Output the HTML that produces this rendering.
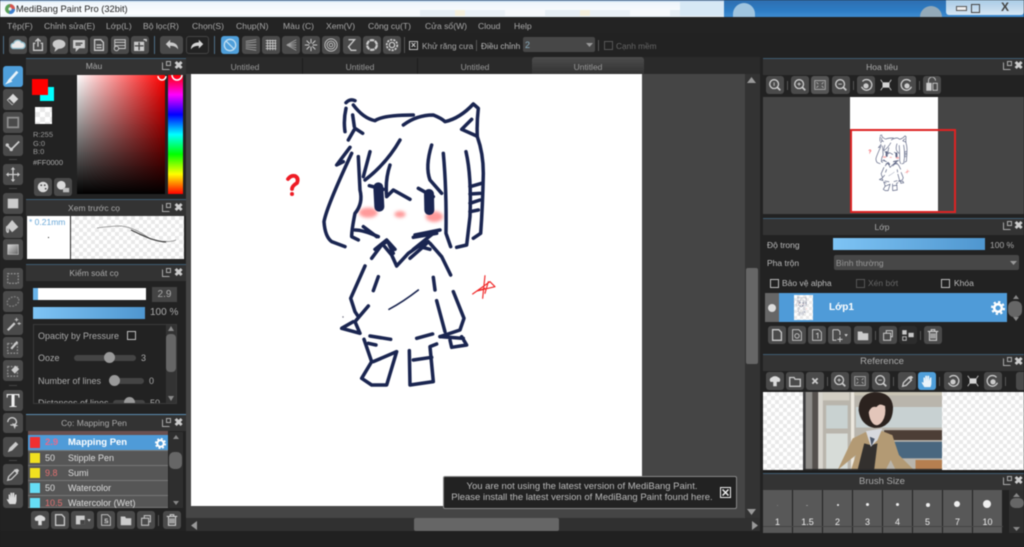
<!DOCTYPE html>
<html><head><meta charset="utf-8"><style>
html,body{margin:0;padding:0;background:#1f1f1f;width:1024px;height:547px;overflow:hidden}
#r{position:relative;width:1024px;height:547px;overflow:hidden;font-family:"Liberation Sans","Noto Sans CJK SC",sans-serif;font-size:9px;color:#aaa;filter:blur(.4px)}
#r div,#r span,#r i,#r>svg{position:absolute}
.t{white-space:nowrap;line-height:12px}
.m{font-size:8.6px;color:#a8a8a8}
.c{text-align:center}
.h{background:#333;border-top:1px solid #3f5b70;box-sizing:border-box;height:17px}
.b{display:block;background:#4a4a4a;border-radius:3px;width:18px;height:18px}
.b svg{position:absolute;left:0;top:0;width:100%;height:100%;fill:none;stroke:#ddd;stroke-width:1.5;transform:scale(.88);opacity:.88}
.cb{width:7px;height:7px;border:1px solid #bbb}
.ck{background:repeating-conic-gradient(#e9e9e9 0 25%,#fff 0 50%) 0 0/8px 8px}
.row{left:28px;width:140px;height:15px;background:#565656;border-bottom:1px solid #777;box-sizing:border-box}
.cell{top:490px;width:29px;height:43px;background:#585858}
.cell b{position:absolute;left:0;right:0;top:27px;text-align:center;font:9px "Liberation Sans",sans-serif;color:#eee}
.cell u{position:absolute;background:#eee;border-radius:50%}
.x{font-size:11px;font-weight:bold;color:#ccc}
.po{width:8px;height:8px;border:1px solid #aaa;border-right-color:transparent;border-top-color:transparent;box-sizing:border-box}
.po::after{content:"";position:absolute;left:3px;top:-2px;width:5px;height:5px;border:1px solid #aaa;box-sizing:border-box}
</style></head><body><div id="r">

<!-- title bar -->
<div style="left:0;top:0;width:1024px;height:17px;background:linear-gradient(#5f8fc4 0,#eef5fb 2px,#fbfdfe 14px,#e6eef5 17px)"></div>
<div style="left:380px;top:10px;width:300px;height:6px;background:repeating-linear-gradient(90deg,#f5f8fb 0 40px,#e6eef4 40px 75px,#f4efdc 75px 85px,#e9f0f6 85px 125px)"></div>
<div style="left:724px;top:0;width:300px;height:17px;background:linear-gradient(#2f6eae,#2d7cc4 60%,#3f8bd0)"></div>
<div style="left:680px;top:2px;width:44px;height:14px;background:#d7e8f5"></div>
<div style="left:733px;top:3px;width:22px;height:14px;border-radius:11px 11px 0 0;background:#9fc4df"></div>
<div style="left:920px;top:6px;width:22px;height:11px;border-radius:11px 11px 0 0;background:#93a9b8"></div>
<div style="left:946px;top:0;width:78px;height:15px;background:linear-gradient(#a9cbe6,#d6e6f3);border-radius:0 0 3px 3px"></div>
<div style="left:956px;top:6px;width:9px;height:3px;background:#eee;border:1px solid #555"></div>
<div style="left:971px;top:4px;width:7px;height:7px;border:1px solid #444"></div>
<span class="t" style="left:1001px;top:1px;font-size:12px;font-weight:bold;color:#444">X</span>
<svg style="left:5px;top:4px" width="10" height="10"><circle cx="5" cy="5" r="5" fill="#5aa05a"/><path d="M5 0A5 5 0 0 1 10 5L5 5Z" fill="#d9534f"/><path d="M5 5L10 5A5 5 0 0 1 4 10Z" fill="#3f7fcf"/><circle cx="5" cy="5" r="1.6" fill="#eee"/></svg>
<span class="t" style="left:16px;top:3px;font-size:9.3px;color:#222">MediBang Paint Pro (32bit)</span>

<!-- menu bar -->
<div style="left:0;top:17px;width:1024px;height:16px;background:#232323"></div>
<span class="t m" style="left:7px;top:20px">Tệp(F)</span>
<span class="t m" style="left:44px;top:20px">Chỉnh sửa(E)</span>
<span class="t m" style="left:106px;top:20px">Lớp(L)</span>
<span class="t m" style="left:143px;top:20px">Bộ lọc(R)</span>
<span class="t m" style="left:192px;top:20px">Chọn(S)</span>
<span class="t m" style="left:236px;top:20px">Chụp(N)</span>
<span class="t m" style="left:283px;top:20px">Màu (C)</span>
<span class="t m" style="left:326px;top:20px">Xem(V)</span>
<span class="t m" style="left:368px;top:20px">Công cụ(T)</span>
<span class="t m" style="left:425px;top:20px">Cửa sổ(W)</span>
<span class="t m" style="left:478px;top:20px">Cloud</span>
<span class="t m" style="left:514px;top:20px">Help</span>

<!-- toolbar -->
<div style="left:0;top:33px;width:1024px;height:24px;background:#222"></div>
<div style="left:3px;top:36px;width:1px;height:18px;background:#4f6f88"></div>
<i class="b" style="left:9px;top:36px"><svg viewBox="0 0 18 18"><path d="M4 13a3 3 0 0 1 0-6a5 5 0 0 1 9-1a3.500 3.500 0 0 1 1 7Z" fill="#fff" stroke="#9cd"/></svg></i>
<i class="b" style="left:29px;top:36px"><svg viewBox="0 0 18 18"><path d="M6 7H4v8h10V7h-2M9 11V2M6 5l3-3l3 3"/></svg></i>
<i class="b" style="left:50px;top:36px"><svg viewBox="0 0 18 18"><ellipse cx="9" cy="8" rx="6.500" ry="4.500" fill="#ddd"/><path d="M6 11l-1 4l4-3" fill="#ddd"/></svg></i>
<i class="b" style="left:70px;top:36px"><svg viewBox="0 0 18 18"><path d="M3 4h12v8H9l-3 3v-3H3Z" fill="#ddd"/><path d="M5 7h8M5 9h6" stroke="#444"/></svg></i>
<i class="b" style="left:90px;top:36px"><svg viewBox="0 0 18 18"><path d="M4 3h7l3 3v9H4ZM6 9h6M6 12h6"/></svg></i>
<i class="b" style="left:111px;top:36px"><svg viewBox="0 0 18 18" style="stroke-width:1.100"><path d="M3 3h12v10H3ZM3 6h12M3 9.500h12"/><circle cx="5" cy="13" r="2.500" fill="#474747"/></svg></i>
<i class="b" style="left:131px;top:36px"><svg viewBox="0 0 18 18"><path d="M3 6h10v9H3Z" fill="#ddd"/><path d="M8 6v9M3 10h10" stroke="#444"/><path d="M13 3h3v2"/></svg></i>
<div style="left:154px;top:36px;width:1px;height:18px;background:#4f6f88"></div>
<i class="b" style="left:160px;top:36px;width:23px"><svg viewBox="0 0 23 18"><path d="M5 8l5-5v3c6 0 9 3 9 8c-2-3-5-4-9-4v3Z" fill="#ddd" stroke="none"/></svg></i>
<i class="b" style="left:186px;top:36px;width:23px;background:#222;box-shadow:inset 0 0 0 1px #444"><svg viewBox="0 0 23 18"><path d="M18 8l-5-5v3c-6 0-9 3-9 8c2-3 5-4 9-4v3Z" fill="#eee" stroke="none"/></svg></i>
<div style="left:214px;top:36px;width:1px;height:18px;background:#4f6f88"></div>
<i class="b" style="left:221px;top:36px;background:#4f9fda"><svg viewBox="0 0 18 18" style="stroke:#cfe6f5"><circle cx="9" cy="9" r="6.500"/><path d="M4.500 4.500l9 9"/></svg></i>
<i class="b" style="left:242px;top:36px"><svg viewBox="0 0 18 18" style="stroke-width:1;stroke:#aaa"><path d="M3 5l12-2M3 7l12-1.500M3 9h12M3 11l12 1M3 13l12 2"/></svg></i>
<i class="b" style="left:262px;top:36px"><svg viewBox="0 0 18 18" style="stroke-width:1"><path d="M3 4h12M3 7h12M3 10h12M3 13h12M5 3v12M8 3v12M11 3v12M14 3v12"/></svg></i>
<i class="b" style="left:282px;top:36px"><svg viewBox="0 0 18 18" style="stroke-width:1;stroke:#aaa"><path d="M4 9l11-6M4 9l11-3M4 9h11M4 9l11 3M4 9l11 6"/></svg></i>
<i class="b" style="left:302px;top:36px"><svg viewBox="0 0 18 18" style="stroke-width:1.100"><path d="M9 2v14M2 9h14M4 4l10 10M14 4L4 14"/><circle cx="9" cy="9" r="2" fill="#474747" stroke="none"/></svg></i>
<i class="b" style="left:322px;top:36px"><svg viewBox="0 0 18 18" style="stroke-width:1"><circle cx="9" cy="9" r="7"/><circle cx="9" cy="9" r="4.500"/><circle cx="9" cy="9" r="2"/></svg></i>
<i class="b" style="left:343px;top:36px"><svg viewBox="0 0 18 18"><path d="M5 3h7L5 11l3 4h6"/></svg></i>
<i class="b" style="left:363px;top:36px"><svg viewBox="0 0 18 18" style="stroke-width:2.500"><circle cx="9" cy="9" r="5.500" stroke-dasharray="5 .8"/></svg></i>
<i class="b" style="left:383px;top:36px"><svg viewBox="0 0 18 18"><circle cx="9" cy="9" r="3"/><circle cx="9" cy="9" r="6" stroke-dasharray="2.500 1.200" stroke-width="2"/></svg></i>
<div style="left:404px;top:37px;width:1px;height:16px;background:#555"></div>
<div class="cb" style="left:409px;top:41px"></div>
<span class="t x" style="left:409px;top:39px;font-size:9px;width:9px;text-align:center">×</span>
<span class="t" style="left:422px;top:40px;font-size:8.300px">Khử răng cưa</span>
<div style="left:476px;top:40px;width:1px;height:11px;background:#555"></div>
<span class="t" style="left:481px;top:40px;color:#bbb;font-size:8.300px">Điều chỉnh</span>
<div style="left:523px;top:37px;width:72px;height:15px;background:#474747;border-radius:2px"></div>
<span class="t" style="left:525px;top:39px;color:#8ab">2</span>
<svg style="left:586px;top:43px" width="7" height="4"><path d="M0 0h7L3.500 4Z" fill="#999"/></svg>
<div style="left:598px;top:40px;width:1px;height:11px;background:#555"></div>
<div class="cb" style="left:604px;top:41px;border-color:#555"></div>
<span class="t" style="left:616px;top:40px;color:#666;font-size:8.300px">Cạnh mềm</span>

<!-- tool column -->
<div style="left:0;top:57px;width:26px;height:474px;background:#222"></div>
<i class="b" style="left:3px;top:66px;width:20px;height:21px;background:#4f9fda"><svg viewBox="0 0 20 21"><path d="M5 16L15 5" stroke="#fff" stroke-width="3"/><path d="M3 18l3-4l2 2Z" fill="#fff" stroke="#fff"/></svg></i>
<i class="b" style="left:3px;top:89px;width:20px;height:21px"><svg viewBox="0 0 20 21"><path d="M3 11l7-7l6 6l-7 7Z" fill="#eee" stroke="none"/><path d="M6 10l5 5l-2 1l-5-5Z" fill="#555" stroke="none"/></svg></i>
<i class="b" style="left:3px;top:112px;width:20px;height:21px"><svg viewBox="0 0 20 21"><rect x="4" y="5" width="12" height="11" stroke="#999" stroke-width="2"/></svg></i>
<i class="b" style="left:3px;top:135px;width:20px;height:21px"><svg viewBox="0 0 20 21"><path d="M3 10l5 5L17 6" stroke-width="2"/><circle cx="3.500" cy="10" r="1.200" fill="#ddd"/><circle cx="8" cy="15" r="1.200" fill="#ddd"/></svg></i>
<i class="b" style="left:3px;top:164px;width:20px;height:21px"><svg viewBox="0 0 20 21"><path d="M10 3v15M3 10.500h14"/><path d="M10 2l-2.500 3h5ZM10 19l-2.500-3h5ZM2 10.500l3-2.500v5ZM18 10.500l-3-2.500v5Z" fill="#ddd" stroke="none"/></svg></i>
<i class="b" style="left:3px;top:193px;width:20px;height:21px"><svg viewBox="0 0 20 21"><rect x="4" y="5" width="12" height="11" fill="#ddd" stroke="none"/></svg></i>
<i class="b" style="left:3px;top:216px;width:20px;height:22px"><svg viewBox="0 0 20 22"><path d="M9 3l7 8l-7 6l-6-7Z" fill="#ddd" stroke="none"/><path d="M3 10c-1 4 0 7 1 7s1-3 0-6"/></svg></i>
<i class="b" style="left:3px;top:239px;width:20px;height:21px"><svg viewBox="0 0 20 21"><defs><linearGradient id="gg" x1="0" x2="1" y1="0" y2="1"><stop offset="0" stop-color="#eee"/><stop offset="1" stop-color="#666"/></linearGradient></defs><rect x="4" y="5" width="12" height="11" fill="url(#gg)" stroke="#ddd" stroke-width=".7"/></svg></i>
<i class="b" style="left:3px;top:268px;width:20px;height:21px"><svg viewBox="0 0 20 21"><rect x="4" y="5" width="12" height="11" stroke="#999" stroke-dasharray="2 1.500"/></svg></i>
<i class="b" style="left:3px;top:291px;width:20px;height:21px"><svg viewBox="0 0 20 21"><ellipse cx="10" cy="10.500" rx="7" ry="5" transform="rotate(-25 10 10.500)" stroke="#888" stroke-dasharray="2 1.500"/></svg></i>
<i class="b" style="left:3px;top:314px;width:20px;height:21px"><svg viewBox="0 0 20 21"><path d="M4 17L12 9" stroke-width="2.500"/><path d="M14 3v4M12 5h4M17 8v3M15 9.500h4" stroke-width="1"/></svg></i>
<i class="b" style="left:3px;top:337px;width:20px;height:21px"><svg viewBox="0 0 20 21"><rect x="4" y="6" width="11" height="11" stroke="#999" stroke-dasharray="2 1.500"/><path d="M8 12l7-8" stroke-width="2.500"/></svg></i>
<i class="b" style="left:3px;top:360px;width:20px;height:21px"><svg viewBox="0 0 20 21"><rect x="4" y="6" width="11" height="11" stroke="#999" stroke-dasharray="2 1.500"/><path d="M8 10l5-5l4 4l-5 5Z" fill="#ddd" stroke="none"/></svg></i>
<i class="b" style="left:3px;top:390px;width:20px;height:21px"></i>
<span class="t" style="left:3px;top:392px;width:20px;text-align:center;font:bold 20px/18px 'Liberation Serif',serif;color:#eee">T</span>
<i class="b" style="left:3px;top:413px;width:20px;height:20px"><svg viewBox="0 0 20 20"><path d="M4 9a5 5 0 0 1 10 0a5 4 0 0 1-7 3"/><path d="M9 10l7 3l-3 1l-1 3Z" fill="#ddd" stroke="none"/></svg></i>
<i class="b" style="left:3px;top:437px;width:20px;height:20px"><svg viewBox="0 0 20 20"><path d="M4 16l2-5l7-7l3 3l-7 7Z" fill="#ddd" stroke="none"/></svg></i>
<i class="b" style="left:3px;top:464px;width:20px;height:21px"><svg viewBox="0 0 20 21"><path d="M4 17l1-4l7-7l3 3l-7 7Z"/><path d="M11 5l4 4l2-3l-2-2Z" fill="#ddd" stroke="none"/></svg></i>
<i class="b" style="left:3px;top:488px;width:20px;height:20px"><svg viewBox="0 0 20 20"><path d="M6 17c-1-2-3-4-3-6l2 1V6h1.500l.5 4V4h2v6l.5-6h2v6l1-4h1.500v7c0 2-1 3-1 4Z" fill="#eee" stroke="none"/></svg></i>
<div style="left:9px;top:159px;width:8px;height:1px;background:#444"></div>
<div style="left:9px;top:188px;width:8px;height:1px;background:#444"></div>
<div style="left:9px;top:385px;width:8px;height:1px;background:#444"></div>
<div style="left:9px;top:460px;width:8px;height:1px;background:#444"></div>

<!-- left panels -->
<div style="left:26px;top:57px;width:160px;height:474px;background:#222"></div>
<div class="h" style="left:26px;top:58px;width:160px"></div>
<span class="t c" style="left:26px;width:136px;top:60px;font-size:8.500px">Màu</span>
<div class="po" style="left:162px;top:62px"></div><span class="t x" style="left:174px;top:60px">✖</span>
<div style="left:40px;top:87px;width:14px;height:14px;background:#0ff"></div>
<div style="left:32px;top:79px;width:16px;height:16px;background:#f00"></div>
<div class="ck" style="left:35px;top:107px;width:17px;height:17px;background-size:10px 10px"></div>
<div style="left:77px;top:75px;width:88px;height:119px;background:linear-gradient(transparent,#000),linear-gradient(90deg,#fff,#f00)"></div>
<div style="left:168px;top:75px;width:15px;height:119px;background:linear-gradient(#f00,#f0f 16.600%,#00f 33.300%,#0ff 50%,#0f0 66.600%,#ff0 83.300%,#f00)"></div>
<svg style="left:155px;top:72px" width="32" height="12"><path d="M3 4a4 4 0 0 0 8 0M17 3a5 5 0 0 0 10 0" fill="none" stroke="#fff" stroke-width="1.500"/></svg>
<span class="t" style="left:33px;top:131px;font-size:7.500px;line-height:8.500px;color:#999">R:255<br>G:0<br>B:0</span>
<span class="t" style="left:33px;top:157px;font-size:7.500px;color:#aaa">#FF0000</span>
<i class="b" style="left:34px;top:178px"><svg viewBox="0 0 18 18"><circle cx="9" cy="9" r="6" fill="#eee" stroke="none"/><circle cx="7" cy="7" r="1" fill="#444" stroke="none"/><circle cx="11" cy="7" r="1" fill="#444" stroke="none"/><circle cx="12" cy="11" r="1" fill="#444" stroke="none"/></svg></i>
<i class="b" style="left:54px;top:178px"><svg viewBox="0 0 18 18"><circle cx="7" cy="7" r="5" fill="#eee" stroke="none"/><rect x="9" y="10" width="7" height="5" fill="#ccc" stroke="none"/></svg></i>

<div class="h" style="left:26px;top:199px;width:160px"></div>
<span class="t c" style="left:26px;width:136px;top:202px;font-size:8.500px">Xem trước cọ</span>
<div class="po" style="left:162px;top:204px"></div><span class="t x" style="left:174px;top:202px">✖</span>
<div style="left:27px;top:216px;width:43px;height:43px;background:#fff"></div>
<span class="t" style="left:29px;top:216px;font-size:8.500px;color:#6aa8d8">* 0.21mm</span>
<div style="left:48px;top:237px;width:1px;height:1px;background:#222"></div>
<div class="ck" style="left:71px;top:216px;width:113px;height:43px"></div>
<svg style="left:71px;top:216px" width="113" height="43"><path d="M26 12Q40 10 50 10Q62 11 78 22Q92 27 102 25L105 24" fill="none" stroke="#888" stroke-width=".8"/><path d="M60 14Q70 19 80 23Q90 26 95 26" fill="none" stroke="#333" stroke-width="1"/></svg>

<div class="h" style="left:26px;top:264px;width:160px"></div>
<span class="t c" style="left:26px;width:136px;top:267px;font-size:8.500px">Kiểm soát cọ</span>
<div class="po" style="left:162px;top:269px"></div><span class="t x" style="left:174px;top:267px">✖</span>
<div style="left:33px;top:288px;width:113px;height:12px;background:#fff"></div>
<div style="left:33px;top:288px;width:5px;height:12px;background:#6ab4ea"></div>
<div style="left:152px;top:287px;width:25px;height:15px;background:#444"></div>
<span class="t c" style="left:152px;width:25px;top:289px;font-size:10px">2.9</span>
<div style="left:33px;top:307px;width:112px;height:12px;background:linear-gradient(90deg,#7ec4f5,#4f96cf)"></div>
<span class="t" style="left:150px;top:307px;font-size:10px">100 %</span>
<div style="left:33px;top:324px;width:144px;height:80px;border:1px solid #3a3a3a;box-sizing:border-box;overflow:hidden">
<span class="t" style="left:4px;top:5px">Opacity by Pressure</span>
<div class="cb" style="left:93px;top:6px"></div>
<span class="t" style="left:4px;top:27px">Ooze</span>
<div style="left:40px;top:30px;width:62px;height:6px;background:#444;border-radius:3px"></div>
<div style="left:70px;top:27px;width:11px;height:11px;border-radius:50%;background:#999"></div>
<span class="t" style="left:107px;top:27px">3</span>
<span class="t" style="left:4px;top:50px">Number of lines</span>
<div style="left:75px;top:53px;width:35px;height:6px;background:#444;border-radius:3px"></div>
<div style="left:75px;top:50px;width:11px;height:11px;border-radius:50%;background:#999"></div>
<span class="t" style="left:115px;top:50px">0</span>
<span class="t" style="left:4px;top:72px">Distances of lines</span>
<div style="left:79px;top:75px;width:32px;height:6px;background:#444;border-radius:3px"></div>
<div style="left:90px;top:72px;width:11px;height:11px;border-radius:50%;background:#999"></div>
<span class="t" style="left:116px;top:72px">50</span>
<div style="left:132px;top:0;width:10px;height:78px;background:#333"></div>
<div style="left:132px;top:9px;width:10px;height:38px;background:#666;border-radius:4px"></div>
</div>
<svg style="left:167px;top:325px" width="8" height="78"><path d="M1 6L4 1L7 6ZM1 71h6L4 76Z" fill="#888"/></svg>

<div class="h" style="left:26px;top:414px;width:160px;border-top-color:#5b8cb0"></div>
<span class="t c" style="left:26px;width:136px;top:417px;font-size:8.500px">Cọ: Mapping Pen</span>
<div class="po" style="left:162px;top:419px"></div><span class="t x" style="left:174px;top:417px">✖</span>
<div class="row" style="top:431px;height:5px;background:#6a5050"></div>
<div class="row" style="top:435px;height:16px;background:#4f9bd8"></div>
<div class="row" style="top:451px"></div><div class="row" style="top:466px"></div><div class="row" style="top:481px"></div><div class="row" style="top:496px;height:12px;overflow:hidden"></div>
<div style="left:30px;top:437px;width:10px;height:11px;background:#f03030"></div><span class="t" style="left:45px;top:437px;color:#e86a8a;font-weight:bold;font-size:9.500px">2.9</span><span class="t" style="left:68px;top:437px;color:#fff;font-weight:bold;font-size:9.500px">Mapping Pen</span>
<svg style="left:155px;top:438px" width="11" height="11"><circle cx="5.500" cy="5.500" r="3.200" fill="none" stroke="#fff" stroke-width="2"/><circle cx="5.500" cy="5.500" r="4.800" fill="none" stroke="#fff" stroke-width="1.500" stroke-dasharray="2 1.800"/></svg>
<div style="left:30px;top:453px;width:10px;height:10px;background:#f0e020"></div><span class="t" style="left:45px;top:452px;color:#ddd">50</span><span class="t" style="left:68px;top:452px;color:#ddd">Stipple Pen</span>
<div style="left:30px;top:468px;width:10px;height:10px;background:#f0e020"></div><span class="t" style="left:45px;top:467px;color:#e07070">9.8</span><span class="t" style="left:68px;top:467px;color:#ddd">Sumi</span>
<div style="left:30px;top:483px;width:10px;height:10px;background:#66ddf5"></div><span class="t" style="left:45px;top:482px;color:#ddd">50</span><span class="t" style="left:68px;top:482px;color:#ddd">Watercolor</span>
<div style="left:30px;top:498px;width:10px;height:10px;background:#66ddf5"></div><span class="t" style="left:45px;top:497px;color:#e07070">10.5</span><span class="t" style="left:68px;top:497px;color:#ddd">Watercolor (Wet)</span>
<div style="left:169px;top:432px;width:14px;height:76px;background:#2e2e2e"></div>
<div style="left:169px;top:452px;width:13px;height:17px;background:#666;border-radius:5px"></div>
<svg style="left:172px;top:433px" width="8" height="74"><path d="M1 6L4 2L7 6ZM1 68h6L4 72Z" fill="#888"/></svg>
<i class="b" style="left:31px;top:511px"><svg viewBox="0 0 18 18"><path d="M4 10a3 3 0 0 1 1-5a5 4 0 0 1 8 0a3 3 0 0 1 1 5h-3v5H7v-5Z" fill="#eee" stroke="none"/></svg></i>
<i class="b" style="left:51px;top:511px"><svg viewBox="0 0 18 18"><path d="M4 3h7l3 3v9H4Z"/></svg></i>
<i class="b" style="left:71px;top:511px;width:23px"><svg viewBox="0 0 23 18"><rect x="4" y="4" width="10" height="10" fill="#ddd" stroke="none"/><path d="M9 9h5v5H9Z" fill="#444" stroke="none"/><path d="M17 8h4l-2 3Z" fill="#ddd" stroke="none"/></svg></i>
<i class="b" style="left:97px;top:511px"><svg viewBox="0 0 18 18" style="stroke-width:1"><path d="M4 3h7l3 3v9H4Z"/><path d="M11 8H8v2h3v2H7"/></svg></i>
<i class="b" style="left:117px;top:511px"><svg viewBox="0 0 18 18"><path d="M3 5h5l1 2h6v8H3Z" fill="#ddd" stroke="none"/></svg></i>
<i class="b" style="left:137px;top:511px"><svg viewBox="0 0 18 18" style="stroke-width:1.100"><path d="M4 7h8v8H4ZM7 7V4h7v7h-2"/></svg></i>
<div style="left:158px;top:515px;width:1px;height:11px;background:#555"></div>
<i class="b" style="left:163px;top:511px"><svg viewBox="0 0 18 18" style="stroke-width:1.300"><path d="M3 5h12M5 5v10h8V5M7 7v6M9 7v6M11 7v6M7 5V3h4v2"/></svg></i>

<!-- tabs -->
<div style="left:186px;top:57px;width:577px;height:17px;background:#2a2a2a"></div>
<div style="left:532px;top:57px;width:112px;height:17px;background:linear-gradient(#4c4c4c,#333);border-radius:3px 3px 0 0"></div>
<div style="left:302px;top:58px;width:1px;height:16px;background:#1c1c1c"></div>
<div style="left:417px;top:58px;width:1px;height:16px;background:#1c1c1c"></div>
<span class="t c" style="left:188px;width:114px;top:61px;font-size:8.500px;color:#999">Untitled</span>
<span class="t c" style="left:303px;width:114px;top:61px;font-size:8.500px;color:#999">Untitled</span>
<span class="t c" style="left:418px;width:114px;top:61px;font-size:8.500px;color:#999">Untitled</span>
<span class="t c" style="left:532px;width:112px;top:61px;font-size:8.500px;color:#999">Untitled</span>

<!-- canvas -->
<div style="left:186px;top:74px;width:559px;height:444px;background:#454545"></div>
<div style="left:191px;top:74px;width:451px;height:432px;background:#fff"></div>
<div style="left:745px;top:74px;width:15px;height:444px;background:#333"></div>
<div style="left:746px;top:268px;width:12px;height:96px;background:#666;border-radius:2px"></div>
<svg style="left:747px;top:76px" width="9" height="7"><path d="M0 7L4.500 1L9 7Z" fill="#999"/></svg>
<svg style="left:747px;top:509px" width="9" height="7"><path d="M0 0h9L4.500 6Z" fill="#999"/></svg>
<div style="left:186px;top:518px;width:574px;height:13px;background:#303030"></div>
<div style="left:414px;top:518px;width:145px;height:13px;background:#666;border-radius:2px"></div>
<svg style="left:752px;top:521px" width="7" height="9"><path d="M0 0L6 4.500L0 9Z" fill="#999"/></svg>
<svg style="left:190px;top:521px" width="7" height="9"><path d="M7 0L1 4.500L7 9Z" fill="#999"/></svg>
<div style="left:186px;top:531px;width:577px;height:16px;background:#202020"></div>
<div style="left:0;top:531px;width:186px;height:16px;background:#202020"></div>

<!-- drawing -->
<svg style="left:0;top:0;pointer-events:none" width="1024" height="547" viewBox="0 0 1024 547" fill="none" stroke-linecap="round" stroke-linejoin="round">
<defs>
<filter id="bl" x="-30%" y="-30%" width="160%" height="160%"><feGaussianBlur stdDeviation="5"/></filter>
<g id="dh">
<g filter="url(#bl)">
<ellipse cx="145" cy="368" rx="28" ry="15" fill="#ff9a9a" stroke="none"/>
<ellipse cx="240" cy="373" rx="17" ry="10" fill="#ff9a9a" stroke="none"/>
<ellipse cx="343" cy="380" rx="26" ry="16" fill="#ff9a9a" stroke="none"/>
</g>
<g stroke="#1a2550" stroke-width="10.500">
<path d="M78 38Q90 25 105 32M78 55Q70 90 75 125M100 45Q130 85 165 92Q190 75 280 75M85 150L105 115L128 130M98 75L103 110"/>
<path d="M250 105Q290 75 340 75Q365 85 375 95Q420 85 460 42L475 55Q470 100 472 140M455 88L425 118L470 138"/>
<path d="M472 140Q490 190 490 250Q488 350 482 430L460 445"/>
<path d="M90 172L50 225L70 215M95 190Q20 350 12 395Q15 440 35 455L75 470"/>
<path d="M115 200L120 300Q130 340 105 370Q95 420 95 440L115 450"/>
<path d="M150 185L130 260M240 150Q200 220 135 270M210 225Q195 270 200 320L220 300L270 328"/>
<path d="M335 165Q315 230 330 270L365 310M370 190Q380 300 378 430L392 470"/>
<path d="M438 185Q455 260 450 380L440 465L410 472"/>
<path d="M450 290L485 280M450 312L480 310M450 340L480 330M450 365L475 360"/>
<path d="M105 420Q130 420 175 440M130 410L170 440M285 435L360 420M280 442L350 430"/>
<path d="M165 478L200 450L225 478M280 478L340 430M300 470L330 478"/>
<path d="M148 287L190 298M295 295L340 320"/>
<path d="M175 292L178 350M327 312L328 360" stroke-width="30"/>
</g></g>
<g id="db" stroke="#1a2550" stroke-width="10.500">
<path d="M155 55L185 15L200 5M190 15L215 45L230 78L265 40L315 5M270 55L310 20L325 5M330 10L365 50L392 105M205 8L220 40"/>
<path d="M135 78L92 175L105 215L115 230M145 198L105 245L120 280L65 265L100 245"/>
<path d="M175 110L160 152M340 112L345 150"/>
<path d="M295 150Q250 185 207 208" stroke-width="5"/>
<path d="M400 155L432 235L420 270L360 290M350 182L375 275"/>
<path d="M150 288L212 298M290 295L338 282"/>
<path d="M132 298L155 365L125 415L155 435L200 435L230 335L160 365M145 310L168 315"/>
<path d="M268 332L270 435L340 425L330 320L350 312M280 360L335 352"/>
<path d="M390 300L395 322L440 315L425 290M360 290L430 295"/>
</g>
<g id="ds" stroke="#f02a2a" stroke-width="3.500">
<path d="M495 107L488 175M458 162L510 125L525 140L472 153L495 145M505 125L495 160"/>
</g>
<g id="all">
<g transform="translate(320 90) scale(.3333)"><use href="#dh"/></g>
<g transform="translate(320 240) scale(.3333)"><use href="#db"/><use href="#ds"/></g>
<path d="M288 179Q291 175 295 176Q299 178 297 183Q292 186 292 189" stroke="#ee1c25" stroke-width="3.800"/>
<circle cx="292" cy="194" r="2" fill="#ee1c25"/>
</g>
</defs>
<use href="#all"/>
<circle cx="343" cy="317" r=".7" fill="#667"/>
</svg>
<!-- notification -->
<div style="left:443px;top:476px;width:294px;height:33px;background:#222;border:1px solid #888;box-sizing:border-box;border-radius:2px"></div>
<span class="t c" style="left:445px;width:274px;top:481px;font-size:9.500px;color:#bbb">You are not using the latest version of MediBang Paint.</span>
<span class="t c" style="left:445px;width:274px;top:492px;font-size:9.500px;color:#bbb">Please install the latest version of MediBang Paint found here.</span>
<div style="left:720px;top:487px;width:9px;height:9px;border:1px solid #eee"></div>
<svg style="left:722px;top:489px" width="7" height="7"><path d="M.5 .5L6.500 6.500M6.500 .5L.5 6.500" stroke="#eee" stroke-width="1.500"/></svg>

<!-- right column -->
<div style="left:760px;top:57px;width:264px;height:490px;background:#222"></div>
<div class="h" style="left:763px;top:58px;width:261px"></div>
<span class="t c" style="left:763px;width:238px;top:61px;font-size:8.500px">Hoa tiêu</span>
<div class="po" style="left:1003px;top:62px"></div><span class="t x" style="left:1014px;top:60px">✖</span>
<i class="b" style="left:766px;top:76px"><svg viewBox="0 0 18 18"><circle cx="8" cy="8" r="5"/><path d="M11.500 11.500L15 15" stroke-width="2"/><path d="M8 6v4" stroke-width="1"/></svg></i>
<div style="left:787px;top:81px;width:1px;height:9px;background:#555"></div>
<i class="b" style="left:791px;top:76px"><svg viewBox="0 0 18 18"><circle cx="8" cy="8" r="5"/><path d="M11.500 11.500L15 15" stroke-width="2"/><path d="M6 8h4M8 6v4" stroke-width="1"/></svg></i>
<i class="b" style="left:811px;top:76px;background:#555"><svg viewBox="0 0 18 18" style="stroke:#bbb"><rect x="3" y="4" width="12" height="10" stroke-width="1"/><path d="M5 6l2 2M13 6l-2 2M5 12l2-2M13 12l-2-2" stroke-width="1"/></svg></i>
<i class="b" style="left:832px;top:76px"><svg viewBox="0 0 18 18"><circle cx="8" cy="8" r="5"/><path d="M11.500 11.500L15 15" stroke-width="2"/><path d="M6 8h4" stroke-width="1"/></svg></i>
<div style="left:853px;top:81px;width:1px;height:9px;background:#555"></div>
<i class="b" style="left:857px;top:76px"><svg viewBox="0 0 18 18"><path d="M5 5a6 6 0 1 1-1 6"/><circle cx="9" cy="10" r="3" fill="#ddd" stroke="none"/></svg></i>
<i class="b" style="left:877px;top:76px;background:#222"><svg viewBox="0 0 18 18"><rect x="5" y="6" width="8" height="6" fill="#eee" stroke="none"/><path d="M3 3l2 3M15 3l-2 3M3 15l2-3M15 15l-2-3" stroke-width="1"/></svg></i>
<i class="b" style="left:898px;top:76px"><svg viewBox="0 0 18 18"><path d="M13 5a6 6 0 1 0 1 6"/><circle cx="9" cy="10" r="3" fill="#ddd" stroke="none"/></svg></i>
<div style="left:919px;top:81px;width:1px;height:9px;background:#555"></div>
<i class="b" style="left:923px;top:76px"><svg viewBox="0 0 18 18" style="stroke-width:1"><rect x="3" y="7" width="5" height="8" fill="#ddd"/><rect x="10" y="7" width="5" height="8"/><path d="M5 7V4a2 2 0 0 1 8 0"/></svg></i>
<div style="left:763px;top:97px;width:261px;height:117px;background:#454545"></div>
<div style="left:850px;top:97px;width:88px;height:116px;background:#fff"></div>
<svg style="left:0;top:0" width="1024" height="547" viewBox="0 0 1024 547" fill="none" stroke-linecap="round" stroke-linejoin="round"><g transform="translate(850 130) scale(.195) translate(-191 -74)" opacity=".7"><use href="#all"/></g></svg>
<div style="left:850px;top:129px;width:106px;height:84px;border:2px solid #dd2222;box-sizing:border-box"></div>

<div class="h" style="left:763px;top:218px;width:261px"></div>
<span class="t c" style="left:763px;width:238px;top:221px;font-size:8.500px">Lớp</span>
<div class="po" style="left:1003px;top:222px"></div><span class="t x" style="left:1014px;top:220px">✖</span>
<span class="t" style="left:767px;top:239px;font-size:8.500px;color:#bbb">Độ trong</span>
<div style="left:833px;top:238px;width:152px;height:12px;background:linear-gradient(90deg,#7ec4f5,#4f96cf)"></div>
<span class="t" style="left:990px;top:239px;font-size:8.500px">100 %</span>
<span class="t" style="left:767px;top:257px;font-size:8.500px;color:#bbb">Pha trộn</span>
<div style="left:834px;top:255px;width:185px;height:15px;background:#474747;border-radius:2px"></div>
<span class="t" style="left:836px;top:257px;font-size:8.500px;color:#999">Bình thường</span>
<svg style="left:1010px;top:261px" width="7" height="4"><path d="M0 0h7L3.500 4Z" fill="#999"/></svg>
<div class="cb" style="left:770px;top:279px"></div><span class="t" style="left:782px;top:277px;font-size:8.500px;color:#bbb">Bảo vệ alpha</span>
<div class="cb" style="left:856px;top:279px;border-color:#555"></div><span class="t" style="left:868px;top:277px;font-size:8.500px;color:#666">Xén bớt</span>
<div class="cb" style="left:941px;top:279px"></div><span class="t" style="left:954px;top:277px;font-size:8.500px;color:#bbb">Khóa</span>
<div style="left:765px;top:293px;width:14px;height:29px;background:#666"></div>
<div style="left:768px;top:304px;width:8px;height:8px;background:#ddd;border-radius:50%"></div>
<div style="left:779px;top:293px;width:228px;height:29px;background:#4f9bd8"></div>
<div class="ck" style="left:794px;top:295px;width:19px;height:25px;background-size:6px 6px"></div>
<svg style="left:794px;top:295px" width="19" height="25" viewBox="0 0 19 25" fill="none" stroke-linecap="round" stroke-linejoin="round"><g transform="translate(0 -1) scale(.065) translate(-290 -60)" opacity=".7"><use href="#all"/></g></svg>
<span class="t" style="left:829px;top:302px;font-size:10px;font-weight:bold;color:#fff">Lớp1</span>
<svg style="left:991px;top:301px" width="14" height="14"><circle cx="7" cy="7" r="3.800" fill="none" stroke="#fff" stroke-width="2.600"/><circle cx="7" cy="7" r="6" fill="none" stroke="#fff" stroke-width="2" stroke-dasharray="2.300 2.400"/></svg>
<div style="left:1008px;top:301px;width:14px;height:16px;background:#666;border-radius:6px"></div>
<svg style="left:1012px;top:293px" width="8" height="29"><path d="M1 6L4 2L7 6ZM1 24h6L4 28Z" fill="#888"/></svg>
<i class="b" style="left:768px;top:326px"><svg viewBox="0 0 18 18"><path d="M4 3h7l3 3v9H4Z"/></svg></i>
<i class="b" style="left:788px;top:326px"><svg viewBox="0 0 18 18" style="stroke-width:1"><path d="M4 3h7l3 3v9H4Z"/><circle cx="9" cy="10" r="2.500"/></svg></i>
<i class="b" style="left:808px;top:326px"><svg viewBox="0 0 18 18" style="stroke-width:1"><path d="M4 3h7l3 3v9H4ZM8 8l2-1v6"/></svg></i>
<i class="b" style="left:828px;top:326px;width:23px"><svg viewBox="0 0 23 18" style="stroke-width:1.100"><path d="M4 3h6l2 2v4M4 3v12h4M12 11v6M9 14h6"/><path d="M17 8h4l-2 3Z" fill="#ddd" stroke="none"/></svg></i>
<i class="b" style="left:854px;top:326px"><svg viewBox="0 0 18 18"><path d="M3 5h5l1 2h6v8H3Z" fill="#ddd" stroke="none"/></svg></i>
<div style="left:875px;top:331px;width:1px;height:9px;background:#555"></div>
<i class="b" style="left:879px;top:326px"><svg viewBox="0 0 18 18" style="stroke-width:1.100"><path d="M4 7h8v8H4ZM7 7V4h7v7h-2"/></svg></i>
<i class="b" style="left:899px;top:326px;background:#2c2c2c"><svg viewBox="0 0 18 18" style="stroke-width:1"><rect x="3" y="4" width="4" height="4" fill="#ddd"/><rect x="3" y="11" width="4" height="4"/><rect x="10" y="7" width="5" height="4" fill="#ddd"/></svg></i>
<div style="left:920px;top:331px;width:1px;height:9px;background:#555"></div>
<i class="b" style="left:924px;top:326px"><svg viewBox="0 0 18 18" style="stroke-width:1.300"><path d="M3 5h12M5 5v10h8V5M7 7v6M9 7v6M11 7v6M7 5V3h4v2"/></svg></i>

<div class="h" style="left:763px;top:354px;width:261px"></div>
<span class="t c" style="left:763px;width:238px;top:356px;font-size:9.500px">Reference</span>
<div class="po" style="left:1003px;top:358px"></div><span class="t x" style="left:1014px;top:356px">✖</span>
<i class="b" style="left:766px;top:372px"><svg viewBox="0 0 18 18"><path d="M4 10a3 3 0 0 1 1-5a5 4 0 0 1 8 0a3 3 0 0 1 1 5h-3v5H7v-5Z" fill="#eee" stroke="none"/></svg></i>
<i class="b" style="left:786px;top:372px"><svg viewBox="0 0 18 18"><path d="M3 5h5l1 2h6v8H3Z"/></svg></i>
<i class="b" style="left:806px;top:372px"><svg viewBox="0 0 18 18" style="stroke-width:2"><path d="M6 6l6 6M12 6l-6 6"/></svg></i>
<div style="left:827px;top:377px;width:1px;height:9px;background:#555"></div>
<i class="b" style="left:831px;top:372px"><svg viewBox="0 0 18 18"><circle cx="8" cy="8" r="5"/><path d="M11.500 11.500L15 15" stroke-width="2"/><path d="M6 8h4M8 6v4" stroke-width="1"/></svg></i>
<i class="b" style="left:851px;top:372px"><svg viewBox="0 0 18 18" style="stroke:#bbb"><rect x="3" y="4" width="12" height="10" stroke-width="1"/><path d="M5 6l2 2M13 6l-2 2M5 12l2-2M13 12l-2-2" stroke-width="1"/></svg></i>
<i class="b" style="left:872px;top:372px"><svg viewBox="0 0 18 18"><circle cx="8" cy="8" r="5"/><path d="M11.500 11.500L15 15" stroke-width="2"/><path d="M6 8h4" stroke-width="1"/></svg></i>
<div style="left:893px;top:377px;width:1px;height:9px;background:#555"></div>
<i class="b" style="left:898px;top:372px"><svg viewBox="0 0 18 18"><path d="M4 15l1-4l6-6l3 3l-6 6Z"/><path d="M11 4l3 3l2-2l-2-2Z" fill="#ddd" stroke="none"/></svg></i>
<i class="b" style="left:918px;top:372px;background:#4f9fda"><svg viewBox="0 0 18 18"><path d="M6 16c-1-2-3-4-3-6l2 1V5h1.500l.5 4V3h2v6l.5-6h2v6l1-4h1.500v7c0 2-1 3-1 4Z" fill="#fff" stroke="none"/></svg></i>
<div style="left:939px;top:377px;width:1px;height:9px;background:#555"></div>
<i class="b" style="left:944px;top:372px"><svg viewBox="0 0 18 18"><path d="M5 5a6 6 0 1 1-1 6"/><circle cx="9" cy="10" r="3" fill="#ddd" stroke="none"/></svg></i>
<i class="b" style="left:964px;top:372px;background:#222"><svg viewBox="0 0 18 18"><rect x="5" y="6" width="8" height="6" fill="#eee" stroke="none"/><path d="M3 3l2 3M15 3l-2 3M3 15l2-3M15 15l-2-3" stroke-width="1"/></svg></i>
<i class="b" style="left:984px;top:372px"><svg viewBox="0 0 18 18"><path d="M13 5a6 6 0 1 0 1 6"/><circle cx="9" cy="10" r="3" fill="#ddd" stroke="none"/></svg></i>
<div style="left:1005px;top:377px;width:1px;height:9px;background:#555"></div>
<i class="b" style="left:1016px;top:372px;width:8px;border-radius:3px 0 0 3px"></i>
<div class="ck" style="left:763px;top:392px;width:261px;height:78px"></div>
<svg style="left:803px;top:392px" width="139" height="78" viewBox="0 0 420 235">
<rect width="420" height="235" fill="#b9b5ac"/>
<rect x="0" y="0" width="58" height="235" fill="#8d8b88"/>
<rect x="0" y="0" width="8" height="235" fill="#3a3a3c"/>
<rect x="28" y="0" width="18" height="235" fill="#55504d"/>
<rect x="46" y="0" width="14" height="235" fill="#d9d6cf"/>
<rect x="70" y="40" width="65" height="70" fill="#c9d2d1"/>
<rect x="70" y="125" width="65" height="110" fill="#d7dcd8"/>
<rect x="60" y="0" width="80" height="25" fill="#d3cfc4"/>
<rect x="145" y="0" width="10" height="235" fill="#ece8df"/>
<rect x="160" y="45" width="260" height="62" fill="#c8d1d2"/>
<rect x="155" y="0" width="265" height="10" fill="#c9c4b4"/>
<rect x="245" y="115" width="175" height="30" fill="#4c3e36"/>
<rect x="275" y="150" width="145" height="50" fill="#49677f"/>
<rect x="340" y="205" width="80" height="30" fill="#b57f50"/>
<path d="M105 235L150 140L195 118L240 118L270 130L290 190L335 235H280L265 205L250 235H145L160 190Z" fill="#b39a74"/>
<path d="M165 235L185 155L205 160L225 155L215 235Z" fill="#33302e"/>
<path d="M190 118L240 110L225 145L205 165Z" fill="#d7d9de"/>
<path d="M202 135l5 28l10-22Z" fill="#4a5568"/>
<path d="M168 55Q168 5 215 0Q268 0 272 45Q272 80 255 95Q240 110 215 108Q175 100 168 55Z" fill="#2b221e"/>
<path d="M198 48Q225 30 248 42Q252 70 240 88Q228 105 215 98Q198 85 198 48Z" fill="#e3c6ba"/>
<path d="M192 50Q225 12 255 40Q235 30 222 45Q205 40 198 62Z" fill="#2b221e"/>
<rect y="232" width="420" height="3" fill="#2a2a2a"/>
</svg>
<div style="left:763px;top:470px;width:261px;height:3px;background:#1d1d1d"></div>

<div class="h" style="left:763px;top:473px;width:261px"></div>
<span class="t c" style="left:763px;width:238px;top:476px;font-size:9.500px">Brush Size</span>
<div class="po" style="left:1003px;top:477px"></div><span class="t x" style="left:1014px;top:475px">✖</span>
<div class="cell" style="left:763px"><b>1</b><u style="left:14px;top:15px;width:1px;height:1px;background:#888"></u></div>
<div class="cell" style="left:793px"><b>1.5</b><u style="left:13px;top:15px;width:2px;height:1px;background:#999"></u></div>
<div class="cell" style="left:823px"><b>2</b><u style="left:14px;top:14px;width:2px;height:2px"></u></div>
<div class="cell" style="left:853px"><b>3</b><u style="left:13px;top:13px;width:3px;height:3px"></u></div>
<div class="cell" style="left:883px"><b>4</b><u style="left:13px;top:13px;width:3px;height:3px"></u></div>
<div class="cell" style="left:913px"><b>5</b><u style="left:13px;top:13px;width:4px;height:4px"></u></div>
<div class="cell" style="left:943px"><b>7</b><u style="left:11px;top:11px;width:6px;height:6px"></u></div>
<div class="cell" style="left:973px"><b>10</b><u style="left:10px;top:10px;width:8px;height:8px"></u></div>
<div style="left:763px;top:526px;width:240px;height:1px;background:#444"></div>
<div style="left:1009px;top:490px;width:15px;height:43px;background:#2e2e2e"></div>
<div style="left:1010px;top:498px;width:14px;height:10px;background:#666;border-radius:5px"></div>
<svg style="left:1012px;top:491px" width="9" height="42"><path d="M1 6L4.500 2L8 6ZM1 36h7L4.500 40Z" fill="#888"/></svg>

</div></body></html>
